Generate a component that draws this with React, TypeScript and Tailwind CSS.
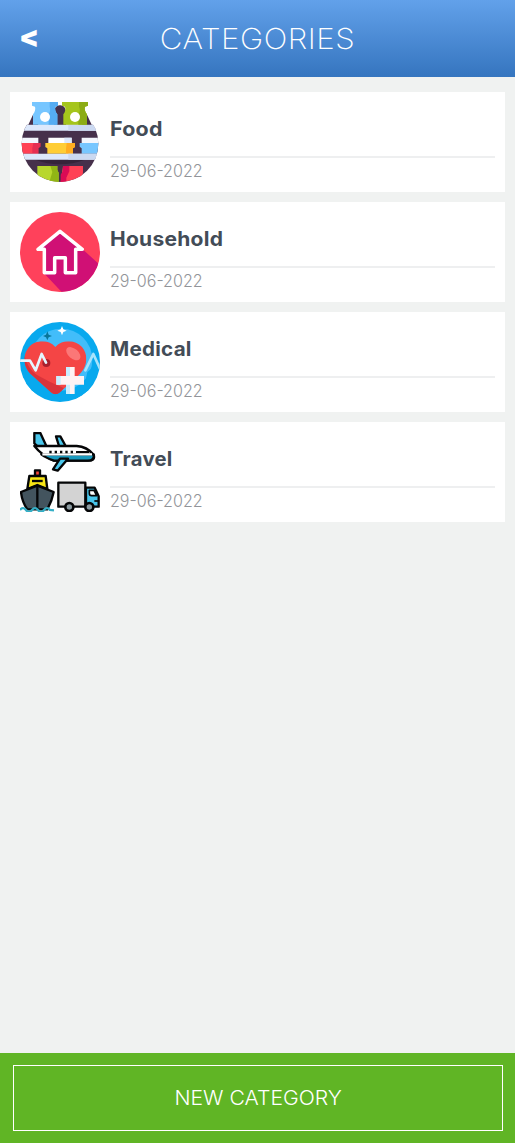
import type { ReactNode } from "react";

function FoodIcon() {
  return (
    <svg viewBox="15 15 240 240" className="size-20 shrink-0" aria-hidden="true">
      <defs>
        <clipPath id="shelf"><circle cx="135" cy="140" r="115" /></clipPath>
      </defs>
      <g clipPath="url(#shelf)">
        <path d="M15 83H255V255H15Z" fill="#46304b" />
        <path d="M60 188Q135 215 210 188Z" fill="#35243a" />
        <path d="M15 83H255V101H15Z" fill="#dce8fb" />
        <path d="M160 83H255V101H160Z" fill="#cbd9f1" />
        <path d="M15 122H70V138H15ZM200 122H255V138H200Z" fill="#f3f6fd" />
        <path d="M15 138H76V149L70 153V170H15Z" fill="#ff4155" />
        <path d="M55 138H76V149L70 153V170H52V153Z" fill="#e52f52" />
        <path d="M100 122H170V138H100Z" fill="#fff" />
        <path d="M148 122H170V138H148Z" fill="#dce8fb" />
        <path d="M91 138H180V150L174 154V170H97V154L91 150Z" fill="#ffcd35" />
        <path d="M155 138H180V150L174 154V170H153V155Z" fill="#ffad20" />
        <path d="M194 138H255V170H200V154L194 149Z" fill="#77c6ff" />
        <path d="M15 170H255V188H15Z" fill="#dce8fb" />
        <path d="M160 170H255V188H160Z" fill="#cbd9f1" />
        <path d="M67 207H127V219L131 227V255H67Z" fill="#b8d72d" />
        <path d="M106 207H127V219L131 227V255H103L112 225Z" fill="#91b515" />
        <path d="M144 207H204V225L200 255H137Z" fill="#ff4155" />
        <path d="M144 207H163V223L154 242V255H137V233L144 222Z" fill="#da0b55" />
      </g>
      <path d="M55 51L40 83H230L215 51L200 83H70Z" fill="#46304b" />
      <path d="M117 83V43Q120 24 135 25Q150 24 153 43V83Z" fill="#46304b" />
      <path d="M51 15H129V26L121 29Q118 40 127 52V83H54V52Q63 40 60 29L51 26Z" fill="#77c6ff" />
      <path d="M104 15H129V26L121 29Q118 40 127 52V83H101V51Q108 41 104 29Z" fill="#55acf3" />
      <path d="M141 15H219V26L210 29Q207 40 216 52V83H145V52Q154 40 150 29L141 26Z" fill="#a5c51c" />
      <path d="M192 15H219V26L210 29Q207 40 216 52V83H190V52Q198 41 192 29Z" fill="#8cac14" />
      <circle cx="90" cy="60" r="15" fill="#fff" />
      <circle cx="180" cy="60" r="15" fill="#fff" />
    </svg>
  );
}

function HouseIcon() {
  return (
    <svg viewBox="15 15 240 240" className="size-20 shrink-0" aria-hidden="true">
      <defs><clipPath id="home"><circle cx="135" cy="135" r="120" /></clipPath></defs>
      <g clipPath="url(#home)">
        <path d="M15 15H255V255H15Z" fill="#ff415b" />
        <path d="M135 73L202 126L255 174V255H140L87 199V127H69Z" fill="#d01075" />
      </g>
      <path d="M135 73L69 127H88V197H119V152H151V197H182V127H202Z" fill="none" stroke="#fff" strokeWidth="10.5" strokeLinejoin="round" />
    </svg>
  );
}

function MedicalIcon() {
  return (
    <svg viewBox="15 15 240 240" className="size-20 shrink-0" aria-hidden="true">
      <defs>
        <clipPath id="medical"><circle cx="135" cy="135" r="120" /></clipPath>
        <clipPath id="heart"><path d="M121 90C98 65 60 70 42 90C20 116 26 151 48 172L108 226Q121 238 135 226L194 172C216 150 222 115 201 90C181 69 144 66 121 90Z" /></clipPath>
      </defs>
      <g clipPath="url(#medical)">
        <path d="M15 15H255V255H15Z" fill="#08a9ee" />
        <circle cx="139" cy="128" r="93" fill="#42bdfa" />
        <path d="M32 140L120 245H200L217 165L235 150V230H32Z" fill="#08a9ee" />
        <g clipPath="url(#heart)">
          <path d="M15 60H230V245H15Z" fill="#f44545" />
          <path d="M28 115Q38 157 66 174Q106 197 146 213L125 245L15 165Z" fill="#d9333b" />
        </g>
        <ellipse cx="175" cy="110" rx="25" ry="15" transform="rotate(40 175 110)" fill="#fb7777" />
        <circle cx="94" cy="138" r="12" fill="#a9202d" />
        <path d="M211 160L235 111L255 155" fill="none" stroke="#a8e3fb" strokeWidth="8" strokeLinecap="round" strokeLinejoin="round" />
        <path d="M15 131H45L62 160L80 111L93 137" fill="none" stroke="#e4f6ff" strokeWidth="8" strokeLinecap="round" strokeLinejoin="round" />
        <path d="M141 27L145 37L155 41L145 45L141 55L137 45L127 41L137 37Z" fill="#fff" />
        <path d="M97 43L101 53L111 57L101 61L97 70L93 61L84 57L93 53Z" fill="#087599" />
      </g>
      <path d="M153 150H179V177H207V203H179V231H153V203H124V177H153Z" fill="#fff3f4" />
      <path d="M153 150H165V177H153ZM124 177H137V203H124ZM153 203H165V231H153Z" fill="#c8edff" />
    </svg>
  );
}

function TravelIcon() {
  return (
    <svg viewBox="15 15 240 240" className="size-20 shrink-0" aria-hidden="true">
      <g stroke="#050607" strokeWidth="7" strokeLinejoin="round">
        <path d="M58 18H76L94 57L73 63L58 49Z" fill="#49c6eb" />
        <path d="M123 28H136L152 57L133 60Z" fill="#49c6eb" />
        <path d="M58 57H185Q216 59 236 83Q242 102 218 101H117Q80 85 58 57Z" fill="#fff" />
        <path d="M79 82H236Q239 101 218 101H117Q92 92 79 82Z" fill="#1999bd" />
        <path d="M135 95H159L128 131L114 127Z" fill="#49c6eb" />
      </g>
      <path d="M82 82H231" stroke="#fff" strokeWidth="7" />
      <path d="M183 75H223" stroke="#050607" strokeWidth="6" />
      <path d="M103 75H178" stroke="#050607" strokeWidth="7" strokeDasharray="7 9" />
      <g stroke="#050607" strokeWidth="7" strokeLinejoin="round">
        <path d="M60 130H75V147H60Z" fill="#f34437" />
        <path d="M43 147H92L97 186L67 174L37 186Z" fill="#f7e515" />
        <path d="M18 195L67 176L116 195Q111 222 97 247H37Q21 224 18 195Z" fill="#43545e" />
        <path d="M67 176V247" />
        <path d="M51 162H83" />
      </g>
      <path d="M15 249Q24 238 33 249T51 249T69 249T87 249T105 249L117 250" fill="none" stroke="#35afc6" strokeWidth="7" />
      <g stroke="#050607" strokeWidth="7" strokeLinejoin="round">
        <path d="M130 167H211V239H130Z" fill="#d3d3d3" />
        <path d="M213 182H239L251 208V239H213Z" fill="#49c6eb" />
        <path d="M223 190H237L245 206H230Q223 206 223 199Z" fill="#fff" strokeWidth="5" />
        <circle cx="163" cy="240" r="12" fill="#8c9ba1" strokeWidth="8" />
        <circle cx="223" cy="240" r="12" fill="#8c9ba1" strokeWidth="8" />
        <path d="M238 222H252" strokeWidth="5" />
      </g>
    </svg>
  );
}

const categories: { name: string; date: string; icon: ReactNode; nameWidth: string }[] = [
  { name: "Food", date: "29-06-2022", icon: <FoodIcon />, nameWidth: "scale-x-[1.07]" },
  { name: "Household", date: "29-06-2022", icon: <HouseIcon />, nameWidth: "scale-x-[1.05]" },
  { name: "Medical", date: "29-06-2022", icon: <MedicalIcon />, nameWidth: "scale-x-[1.03]" },
  { name: "Travel", date: "29-06-2022", icon: <TravelIcon />, nameWidth: "scale-x-[1.01]" },
];

export default function App() {
  return (
    <div className="flex h-[1143px] flex-col bg-[#f0f2f1] font-['Inter',sans-serif]">
      <header className="grid h-[77px] shrink-0 grid-cols-[80px_1fr_80px] items-center bg-linear-to-b from-[#62a1ea] to-[#3575bf] text-white">
        <button className="pb-1 pl-[19px] text-left text-[29px] leading-9 font-black" aria-label="Back">&lt;</button>
        <h1 className="scale-x-[1.077] text-center text-[29px] leading-9 font-extralight tracking-[0.5px] whitespace-nowrap">CATEGORIES</h1>
      </header>
      <main className="flex flex-1 flex-col gap-2.5 px-2.5 pt-[15px]">
        {categories.map((category) => (
          <article key={category.name} className="flex h-[100px] gap-2.5 bg-white p-2.5">
            {category.icon}
            <div className="flex flex-1 flex-col">
              <h2 className="flex h-14 items-center border-b-2 border-[#eeeff0] text-[20px] leading-6 font-bold tracking-[0.25px] text-[#434c57]">
                <span className={`origin-left ${category.nameWidth}`}>{category.name}</span>
              </h2>
              <p className="origin-left scale-x-[0.945] self-start pt-[3px] text-[17px] leading-5 font-light text-[#929499]">{category.date}</p>
            </div>
          </article>
        ))}
      </main>
      <footer className="h-[90px] shrink-0 bg-[#60b525] py-3 pr-3 pl-[13px]">
        <button className="flex h-[66px] w-full items-center justify-center border border-white text-[19.5px] leading-6 font-light text-white">
          <span className="scale-x-[1.085]">NEW CATEGORY</span>
        </button>
      </footer>
    </div>
  );
}
